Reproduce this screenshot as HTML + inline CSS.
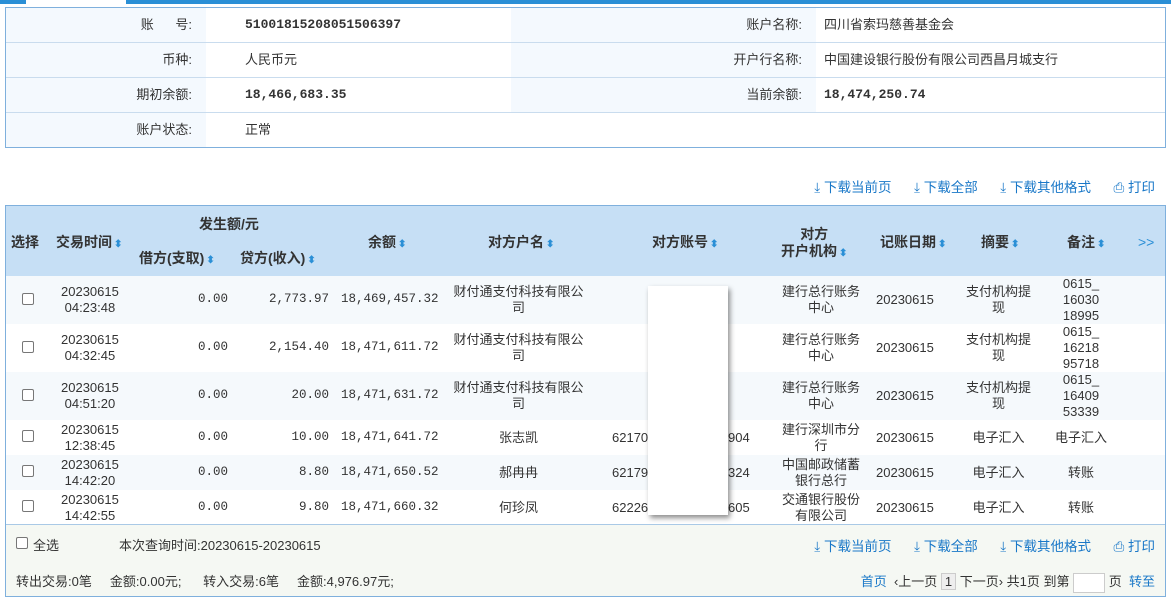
<!DOCTYPE html>
<html><head><meta charset="utf-8"><style>
*{margin:0;padding:0;box-sizing:border-box}
body{width:1171px;height:598px;background:#fff;font-family:"Liberation Sans","WenQuanYi Zen Hei","Noto Sans CJK SC",sans-serif;font-size:13px;color:#333;position:relative;overflow:hidden}
.abs{position:absolute}
.topbar{left:0;top:0;width:1171px;height:4px;background:#2a8fd6}
.gap{left:26px;top:0;width:100px;height:4px;background:#fff}
.info{left:5px;top:7px;width:1161px;height:141px;border:1px solid #7fb0dd}
.row{position:absolute;left:0;width:1159px;height:35px;border-bottom:1px solid #c9dcee}
.lab{position:absolute;top:0;height:34px;background:#f4f9fe;text-align:right;line-height:34px;padding-right:14px}
.val{position:absolute;top:0;line-height:34px}
.mono{font-family:"Liberation Mono","WenQuanYi Zen Hei",monospace;font-weight:bold;color:#333;font-size:13px}
.links{color:#1a78c8;font-size:13.5px;word-spacing:0}
.tbl{left:5px;top:205px;width:1161px;height:392px;border:1px solid #7fb0dd}
.hdr{position:absolute;left:0;top:0;width:1159px;height:70px;background:#c6dff5}
.h{position:absolute;font-weight:bold;color:#333;font-size:14px;text-align:center;line-height:17px}
.s{color:#2a8fd6;font-size:10px;margin-left:2px}
.r{position:absolute;left:0;width:1159px}
.c{position:absolute;text-align:center;line-height:16px;font-size:13px}
.n{position:absolute;text-align:right;font-family:"Liberation Mono",monospace;font-size:12.5px}
.cb{position:absolute;left:16px;width:12px;height:12px;border:1px solid #777;border-radius:2px;background:#fff}
.foot{position:absolute;left:0;top:318px;width:1159px;height:72px;background:#f5f8f3;border-top:1px solid #a9c9e6}
</style></head><body>
<div class="abs topbar"></div><div class="abs gap"></div>
<div class="abs info">
 <div class="row" style="top:0"><div class="lab" style="left:0;width:200px">账&nbsp;&nbsp;&nbsp;&nbsp;&nbsp;&nbsp;号:</div><div class="val mono" style="left:239px">51001815208051506397</div><div class="lab" style="left:505px;width:305px">账户名称:</div><div class="val" style="left:818px">四川省索玛慈善基金会</div></div>
 <div class="row" style="top:35px"><div class="lab" style="left:0;width:200px">币种:</div><div class="val" style="left:239px">人民币元</div><div class="lab" style="left:505px;width:305px">开户行名称:</div><div class="val" style="left:818px">中国建设银行股份有限公司西昌月城支行</div></div>
 <div class="row" style="top:70px"><div class="lab" style="left:0;width:200px">期初余额:</div><div class="val mono" style="left:239px">18,466,683.35</div><div class="lab" style="left:505px;width:305px">当前余额:</div><div class="val mono" style="left:818px">18,474,250.74</div></div>
 <div class="row" style="top:105px;border:none"><div class="lab" style="left:0;width:200px">账户状态:</div><div class="val" style="left:239px">正常</div></div>
</div>
<div class="abs links" style="right:16px;top:176px">⤓ 下载当前页&nbsp;&nbsp;&nbsp;&nbsp;&nbsp;&nbsp;⤓ 下载全部&nbsp;&nbsp;&nbsp;&nbsp;&nbsp;&nbsp;⤓ 下载其他格式&nbsp;&nbsp;&nbsp;&nbsp;&nbsp;&nbsp;⎙ 打印</div>
<div class="abs tbl">
 <div class="hdr">
  <div class="h" style="left:5px;top:28px">选择</div>
  <div class="h" style="left:50px;top:28px">交易时间<span class="s">⬍</span></div>
  <div class="h" style="left:193px;top:10px">发生额/元</div>
  <div class="h" style="left:133px;top:44px">借方(支取)<span class="s">⬍</span></div>
  <div class="h" style="left:234px;top:44px">贷方(收入)<span class="s">⬍</span></div>
  <div class="h" style="left:362px;top:28px">余额<span class="s">⬍</span></div>
  <div class="h" style="left:482px;top:28px">对方户名<span class="s">⬍</span></div>
  <div class="h" style="left:646px;top:28px">对方账号<span class="s">⬍</span></div>
  <div class="h" style="left:775px;top:20px">对方<br>开户机构<span class="s">⬍</span></div>
  <div class="h" style="left:874px;top:28px">记账日期<span class="s">⬍</span></div>
  <div class="h" style="left:975px;top:28px">摘要<span class="s">⬍</span></div>
  <div class="h" style="left:1061px;top:28px">备注<span class="s">⬍</span></div>
  <div class="h" style="left:1132px;top:28px;color:#2a8fd6;font-weight:normal">&gt;&gt;</div>
 </div>
 <div class="r" style="top:70px;height:48px;background:#f5f9fc"><div class="cb" style="top:17px"></div><div class="c" style="left:55px;top:8px">20230615<br>04:23:48</div><div class="n" style="left:140px;width:82px;top:16px">0.00</div><div class="n" style="left:230px;width:93px;top:16px">2,773.97</div><div class="n" style="left:335px;width:97px;top:16px">18,469,457.32</div><div class="c" style="left:440px;width:145px;top:8px">财付通支付科技有限公<br>司</div><div class="c" style="left:770px;width:90px;top:8px">建行总行账务<br>中心</div><div class="c" style="left:870px;top:16px">20230615</div><div class="c" style="left:955px;width:75px;top:8px">支付机构提<br>现</div><div class="c" style="left:1040px;width:70px;top:0">0615_<br>16030<br>18995</div></div>
 <div class="r" style="top:118px;height:48px;background:#fff"><div class="cb" style="top:17px"></div><div class="c" style="left:55px;top:8px">20230615<br>04:32:45</div><div class="n" style="left:140px;width:82px;top:16px">0.00</div><div class="n" style="left:230px;width:93px;top:16px">2,154.40</div><div class="n" style="left:335px;width:97px;top:16px">18,471,611.72</div><div class="c" style="left:440px;width:145px;top:8px">财付通支付科技有限公<br>司</div><div class="c" style="left:770px;width:90px;top:8px">建行总行账务<br>中心</div><div class="c" style="left:870px;top:16px">20230615</div><div class="c" style="left:955px;width:75px;top:8px">支付机构提<br>现</div><div class="c" style="left:1040px;width:70px;top:0">0615_<br>16218<br>95718</div></div>
 <div class="r" style="top:166px;height:48px;background:#f5f9fc"><div class="cb" style="top:17px"></div><div class="c" style="left:55px;top:8px">20230615<br>04:51:20</div><div class="n" style="left:140px;width:82px;top:16px">0.00</div><div class="n" style="left:230px;width:93px;top:16px">20.00</div><div class="n" style="left:335px;width:97px;top:16px">18,471,631.72</div><div class="c" style="left:440px;width:145px;top:8px">财付通支付科技有限公<br>司</div><div class="c" style="left:770px;width:90px;top:8px">建行总行账务<br>中心</div><div class="c" style="left:870px;top:16px">20230615</div><div class="c" style="left:955px;width:75px;top:8px">支付机构提<br>现</div><div class="c" style="left:1040px;width:70px;top:0">0615_<br>16409<br>53339</div></div>
 <div class="r" style="top:214px;height:35px;background:#fff"><div class="cb" style="top:10px"></div><div class="c" style="left:55px;top:2px">20230615<br>12:38:45</div><div class="n" style="left:140px;width:82px;top:10px">0.00</div><div class="n" style="left:230px;width:93px;top:10px">10.00</div><div class="n" style="left:335px;width:97px;top:10px">18,471,641.72</div><div class="c" style="left:440px;width:145px;top:10px">张志凯</div><div class="c" style="left:606px;top:10px">62170</div><div class="c" style="left:722px;top:10px">904</div><div class="c" style="left:770px;width:90px;top:2px">建行深圳市分<br>行</div><div class="c" style="left:870px;top:10px">20230615</div><div class="c" style="left:955px;width:75px;top:10px">电子汇入</div><div class="c" style="left:1040px;width:70px;top:10px">电子汇入</div></div>
 <div class="r" style="top:249px;height:35px;background:#f5f9fc"><div class="cb" style="top:10px"></div><div class="c" style="left:55px;top:2px">20230615<br>14:42:20</div><div class="n" style="left:140px;width:82px;top:10px">0.00</div><div class="n" style="left:230px;width:93px;top:10px">8.80</div><div class="n" style="left:335px;width:97px;top:10px">18,471,650.52</div><div class="c" style="left:440px;width:145px;top:10px">郝冉冉</div><div class="c" style="left:606px;top:10px">62179</div><div class="c" style="left:722px;top:10px">324</div><div class="c" style="left:770px;width:90px;top:2px">中国邮政储蓄<br>银行总行</div><div class="c" style="left:870px;top:10px">20230615</div><div class="c" style="left:955px;width:75px;top:10px">电子汇入</div><div class="c" style="left:1040px;width:70px;top:10px">转账</div></div>
 <div class="r" style="top:284px;height:34px;background:#fff"><div class="cb" style="top:10px"></div><div class="c" style="left:55px;top:2px">20230615<br>14:42:55</div><div class="n" style="left:140px;width:82px;top:10px">0.00</div><div class="n" style="left:230px;width:93px;top:10px">9.80</div><div class="n" style="left:335px;width:97px;top:10px">18,471,660.32</div><div class="c" style="left:440px;width:145px;top:10px">何珍凤</div><div class="c" style="left:606px;top:10px">62226</div><div class="c" style="left:722px;top:10px">605</div><div class="c" style="left:770px;width:90px;top:2px">交通银行股份<br>有限公司</div><div class="c" style="left:870px;top:10px">20230615</div><div class="c" style="left:955px;width:75px;top:10px">电子汇入</div><div class="c" style="left:1040px;width:70px;top:10px">转账</div></div>
 <div class="foot">
  <div class="cb" style="left:10px;top:12px"></div><div class="abs" style="left:27px;top:10px">全选</div>
  <div class="abs" style="left:113px;top:10px">本次查询时间:20230615-20230615</div>
  <div class="abs links" style="right:10px;top:10px">⤓ 下载当前页&nbsp;&nbsp;&nbsp;&nbsp;&nbsp;&nbsp;⤓ 下载全部&nbsp;&nbsp;&nbsp;&nbsp;&nbsp;&nbsp;⤓ 下载其他格式&nbsp;&nbsp;&nbsp;&nbsp;&nbsp;&nbsp;⎙ 打印</div>
  <div class="abs" style="left:10px;top:46px">转出交易:0笔&nbsp;&nbsp;&nbsp;&nbsp;&nbsp;金额:0.00元;&nbsp;&nbsp;&nbsp;&nbsp;&nbsp;&nbsp;转入交易:6笔&nbsp;&nbsp;&nbsp;&nbsp;&nbsp;金额:4,976.97元;</div>
  <div class="abs" style="right:10px;top:46px"><span style="color:#1a78c8">首页</span> &nbsp;‹上一页 <span style="display:inline-block;border:1px solid #ccc;background:#eee;padding:0 3px">1</span> 下一页› 共1页 到第 <span style="display:inline-block;width:32px;height:20px;border:1px solid #ccc;background:#fff;vertical-align:middle"></span> 页 &nbsp;<span style="color:#1a78c8">转至</span></div>
 </div>
</div>
<div class="abs" style="left:648px;top:286px;width:80px;height:229px;background:#fff;box-shadow:2px 3px 5px rgba(0,0,0,.45)"></div>
</body></html>
